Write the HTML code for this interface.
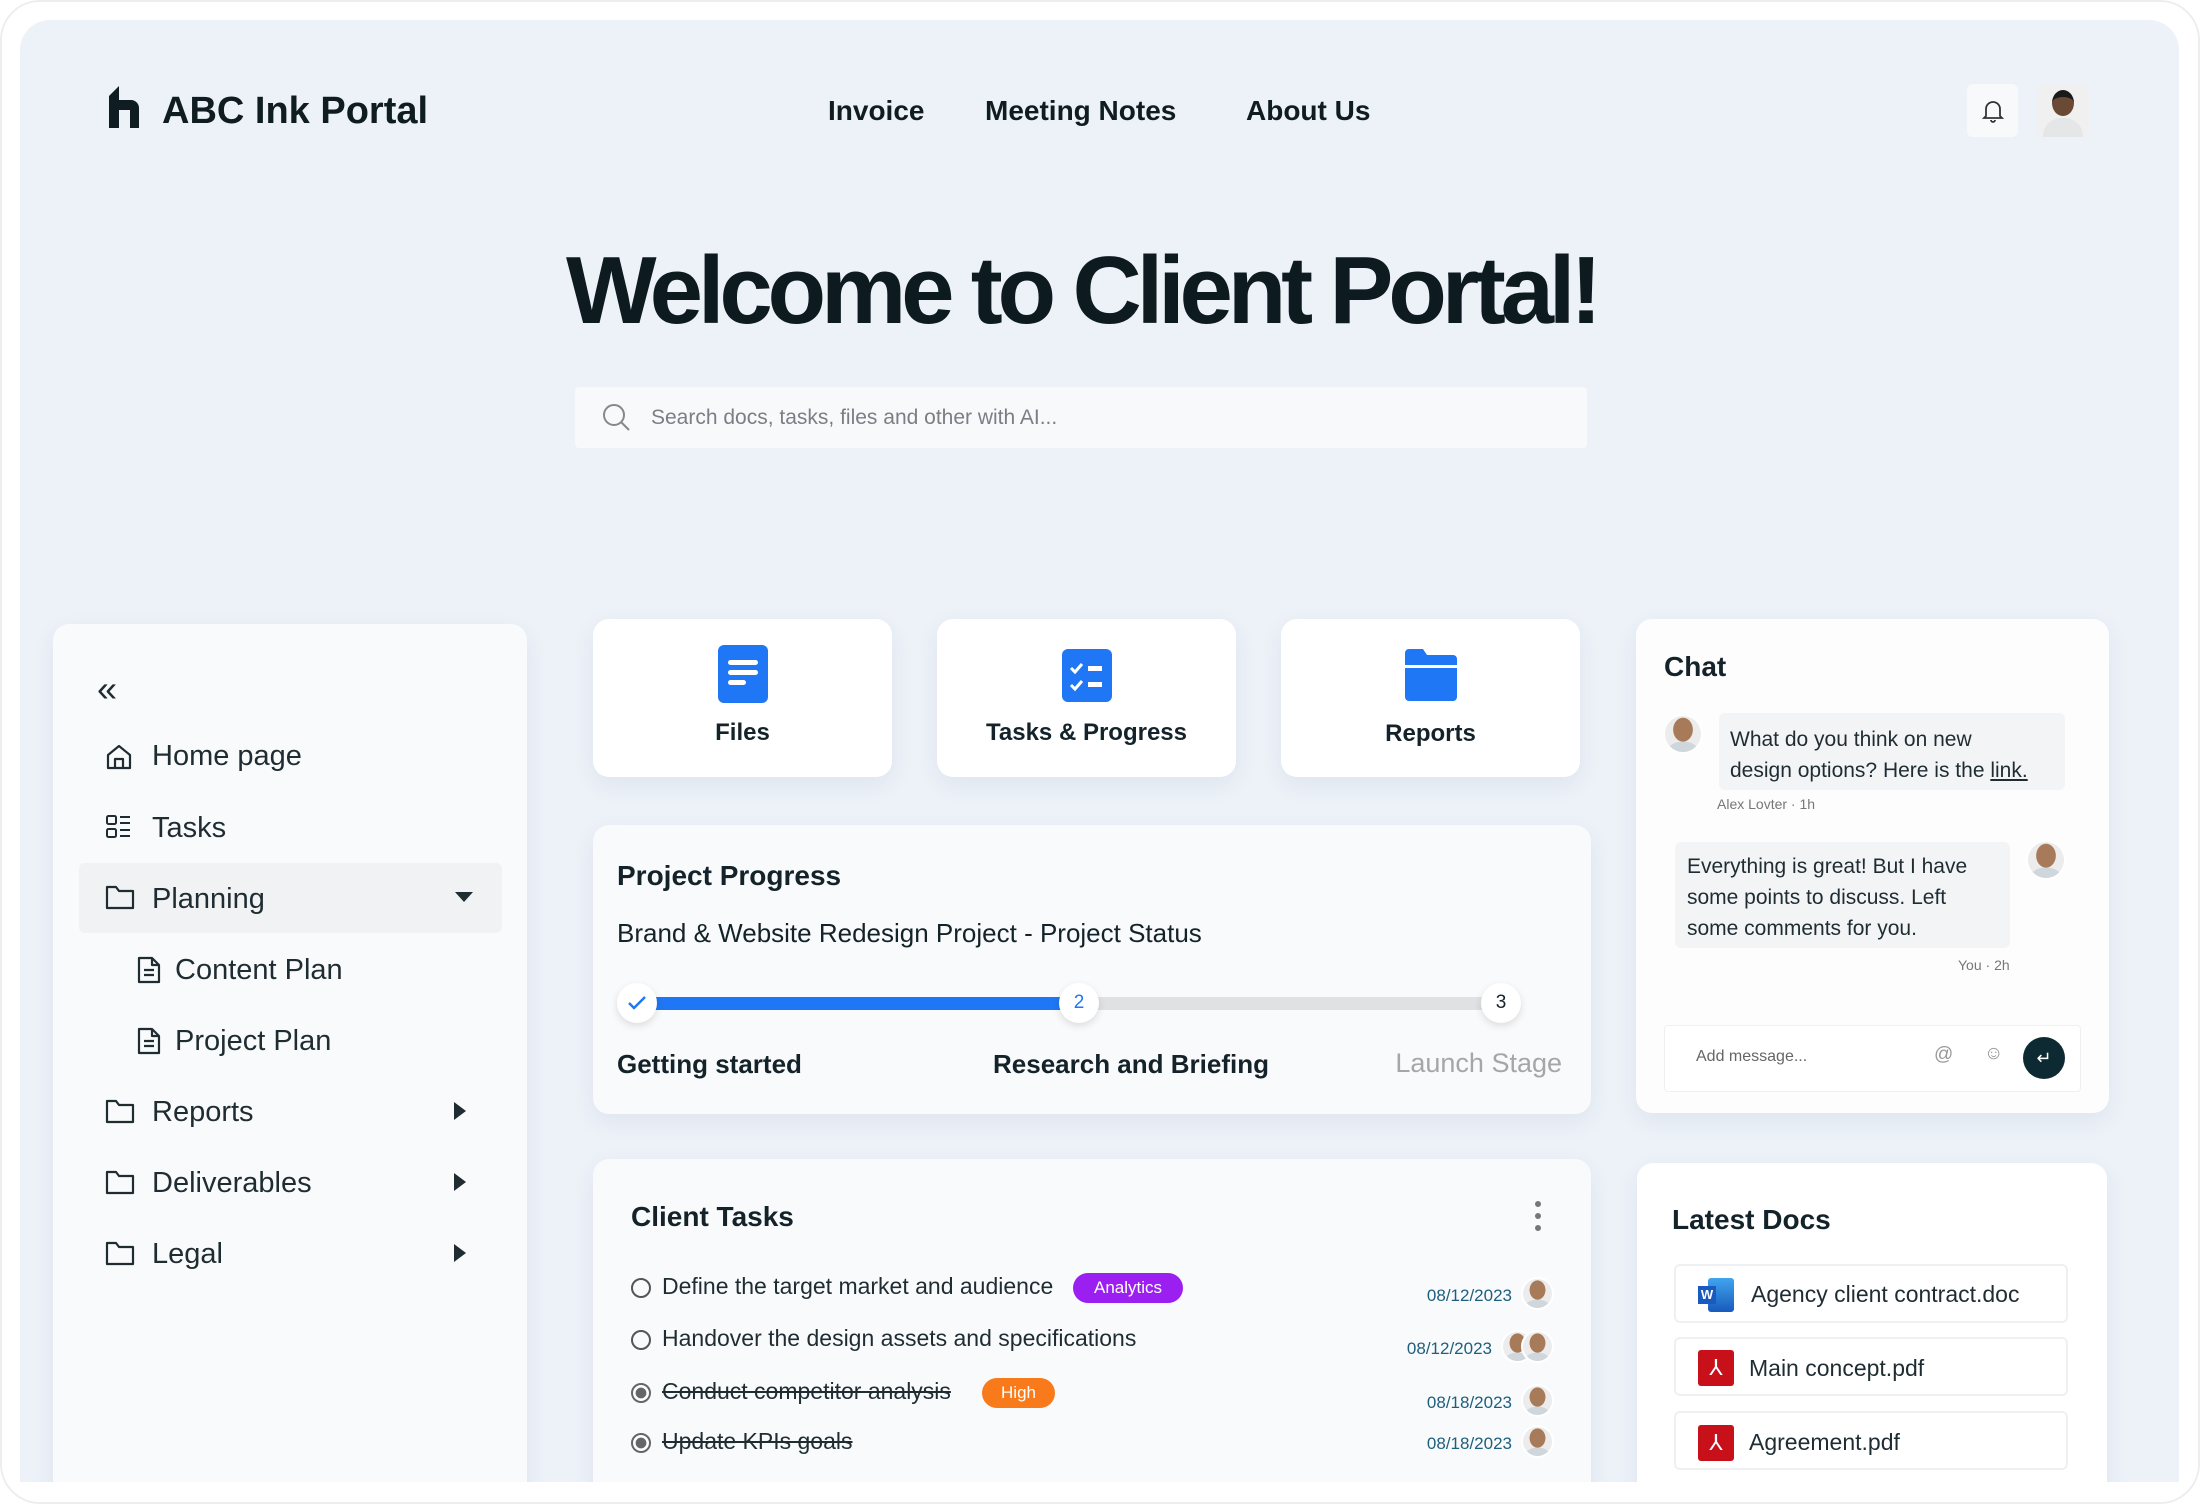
<!DOCTYPE html>
<html><head><meta charset="utf-8"><style>
*{box-sizing:border-box;margin:0;padding:0}
body{width:2200px;height:1504px;background:#fff;font-family:"Liberation Sans",sans-serif;color:#14232a;position:relative;overflow:hidden}
.abs{position:absolute}
.frame{position:absolute;left:0;top:0;width:2200px;height:1504px;border:2px solid #eceef1;border-radius:40px;background:#fff}
.main{position:absolute;left:20px;top:20px;width:2159px;height:1462px;background:#edf2f9;border-radius:30px 30px 0 0;overflow:hidden}
.card{position:absolute;background:#f9fafc;border-radius:16px;box-shadow:0 8px 24px rgba(40,60,90,.07)}
.t{position:absolute;white-space:nowrap}
.side .t{font-size:29px;color:#1f2d33}
.nav{font-size:28px;font-weight:700;color:#0f1d22}
.pill{position:absolute;border-radius:16px;color:#fff;font-size:17px;text-align:center;line-height:30px}
.date{position:absolute;font-size:17px;color:#1d5f7c;text-align:right;width:140px}
.av{position:absolute;border-radius:50%;background:radial-gradient(ellipse 28% 34% at 50% 38%,#a77a5a 0 95%,transparent 100%),radial-gradient(ellipse 45% 30% at 50% 100%,#cfd6dc 0 95%,transparent 100%),#ececec;border:2px solid #fff}
.doc{position:absolute;left:1654px;width:394px;height:59px;background:#fff;border:2px solid #eef0f3;border-radius:6px}
.h{font-weight:700}
</style></head><body>
<div class="frame"></div>
<div class="main">
<svg class="abs" style="left:87px;top:66px" width="34" height="42" viewBox="0 0 34 42"><path d="M2 42V10L12 0v42zM12 14h12a8 8 0 0 1 8 8v20h-9V24h-11z" fill="#0f1d22"/></svg>
<div class="t h" style="left:142px;top:70px;font-size:38px;color:#0f1d22">ABC Ink Portal</div>
<div class="t nav" style="left:808px;top:75px">Invoice</div>
<div class="t nav" style="left:965px;top:75px">Meeting Notes</div>
<div class="t nav" style="left:1226px;top:75px">About Us</div>
<div class="abs" style="left:1947px;top:64px;width:51px;height:53px;background:#f8f9fb;border-radius:6px"></div>
<svg class="abs" style="left:1962px;top:79px" width="22" height="24" viewBox="0 0 22 24"><path d="M4 17V10a7 7 0 0 1 14 0v7l2 2H2zM9 21a2 2 0 0 0 4 0" fill="none" stroke="#333" stroke-width="1.8"/></svg>
<div class="abs" style="left:2017px;top:64px;width:52px;height:53px;border-radius:6px;background:#f0f0f0;overflow:hidden"><div class="abs" style="left:15px;top:6px;width:22px;height:26px;border-radius:50%;background:#6b4a35;border-top:7px solid #1a1a1a"></div><div class="abs" style="left:6px;top:34px;width:40px;height:24px;border-radius:18px 18px 0 0;background:#e4e6e8"></div></div>
<div class="t" style="left:546px;top:216px;font-size:96px;font-weight:700;letter-spacing:-5.2px;color:#0d1a1f">Welcome to Client Portal!</div>
<div class="abs" style="left:555px;top:367px;width:1012px;height:61px;background:#f8f9fb;border-radius:4px"></div>
<svg class="abs" style="left:582px;top:383px" width="30" height="30" viewBox="0 0 30 30"><circle cx="12" cy="12" r="10" fill="none" stroke="#888" stroke-width="2"/><path d="M19 19l8 8" stroke="#888" stroke-width="2"/></svg>
<div class="t" style="left:631px;top:386px;font-size:21px;color:#7a7f85">Search docs, tasks, files and other with AI...</div>

<div class="card side" style="left:33px;top:604px;width:474px;height:900px">
<div class="t" style="left:44px;top:44px;font-size:36px;color:#1f2d33">«</div>
<div class="abs" style="left:26px;top:239px;width:423px;height:70px;background:#f1f2f4;border-radius:6px"></div>
<svg class="abs" style="left:52px;top:119px" width="28" height="28" viewBox="0 0 28 28"><path d="M3 12L14 3l11 9v13H3zM10 25v-9h8v9" fill="none" stroke="#1f2d33" stroke-width="2.2" stroke-linejoin="round"/></svg>
<div class="t" style="left:99px;top:116px">Home page</div>
<svg class="abs" style="left:52px;top:189px" width="28" height="28" viewBox="0 0 28 28"><rect x="2" y="3" width="9" height="8" rx="1.5" fill="none" stroke="#1f2d33" stroke-width="2"/><rect x="2" y="16" width="9" height="8" rx="1.5" fill="none" stroke="#1f2d33" stroke-width="2"/><path d="M15 4h10M15 10h10M15 17h10M15 23h10" stroke="#1f2d33" stroke-width="2"/></svg>
<div class="t" style="left:99px;top:188px">Tasks</div>
<svg class="abs" style="left:52px;top:260px" width="30" height="26" viewBox="0 0 30 26"><path d="M2 3h9l3 4h14v17H2z" fill="none" stroke="#1f2d33" stroke-width="2.2" stroke-linejoin="round"/></svg>
<div class="t" style="left:99px;top:259px">Planning</div>
<svg class="abs" style="left:402px;top:268px" width="18" height="12"><path d="M0 0h18L9 10z" fill="#1f2d33"/></svg>
<svg class="abs" style="left:84px;top:332px" width="24" height="28" viewBox="0 0 24 28"><path d="M2 2h13l7 7v17H2zM15 2v7h7M7 14h10M7 19h10" fill="none" stroke="#1f2d33" stroke-width="2.2" stroke-linejoin="round"/></svg>
<div class="t" style="left:122px;top:330px">Content Plan</div>
<svg class="abs" style="left:84px;top:403px" width="24" height="28" viewBox="0 0 24 28"><path d="M2 2h13l7 7v17H2zM15 2v7h7M7 14h10M7 19h10" fill="none" stroke="#1f2d33" stroke-width="2.2" stroke-linejoin="round"/></svg>
<div class="t" style="left:122px;top:401px">Project Plan</div>
<svg class="abs" style="left:52px;top:474px" width="30" height="26" viewBox="0 0 30 26"><path d="M2 3h9l3 4h14v17H2z" fill="none" stroke="#1f2d33" stroke-width="2.2" stroke-linejoin="round"/></svg>
<div class="t" style="left:99px;top:472px">Reports</div>
<svg class="abs" style="left:401px;top:478px" width="12" height="18"><path d="M0 0l12 9-12 9z" fill="#1f2d33"/></svg>
<svg class="abs" style="left:52px;top:545px" width="30" height="26" viewBox="0 0 30 26"><path d="M2 3h9l3 4h14v17H2z" fill="none" stroke="#1f2d33" stroke-width="2.2" stroke-linejoin="round"/></svg>
<div class="t" style="left:99px;top:543px">Deliverables</div>
<svg class="abs" style="left:401px;top:549px" width="12" height="18"><path d="M0 0l12 9-12 9z" fill="#1f2d33"/></svg>
<svg class="abs" style="left:52px;top:616px" width="30" height="26" viewBox="0 0 30 26"><path d="M2 3h9l3 4h14v17H2z" fill="none" stroke="#1f2d33" stroke-width="2.2" stroke-linejoin="round"/></svg>
<div class="t" style="left:99px;top:614px">Legal</div>
<svg class="abs" style="left:401px;top:620px" width="12" height="18"><path d="M0 0l12 9-12 9z" fill="#1f2d33"/></svg>
</div>

<div class="card" style="left:573px;top:599px;width:299px;height:158px;background:#fff">
<svg class="abs" style="left:125px;top:26px" width="50" height="58" viewBox="0 0 50 58"><rect width="50" height="58" rx="6" fill="#1f77f5"/><rect x="10" y="15" width="30" height="5" rx="2.5" fill="#fff"/><rect x="10" y="25" width="30" height="5" rx="2.5" fill="#fff"/><rect x="10" y="35" width="18" height="5" rx="2.5" fill="#fff"/></svg>
<div class="t h" style="left:0;width:299px;text-align:center;top:100px;font-size:24px">Files</div></div>
<div class="card" style="left:917px;top:599px;width:299px;height:158px;background:#fff">
<svg class="abs" style="left:125px;top:30px" width="50" height="53" viewBox="0 0 50 53"><rect width="50" height="53" rx="6" fill="#1f77f5"/><path d="M9 19l4 4 7-8M9 36l4 4 7-8" fill="none" stroke="#fff" stroke-width="3"/><rect x="26" y="17" width="14" height="5" fill="#fff"/><rect x="26" y="33" width="14" height="5" fill="#fff"/></svg>
<div class="t h" style="left:0;width:299px;text-align:center;top:100px;font-size:24px">Tasks &amp; Progress</div></div>
<div class="card" style="left:1261px;top:599px;width:299px;height:158px;background:#fff">
<svg class="abs" style="left:124px;top:30px" width="52" height="52" viewBox="0 0 52 52"><path d="M0 4a4 4 0 0 1 4-4h14l4 6h26a4 4 0 0 1 4 4v6H0z" fill="#1f77f5"/><path d="M0 19h52v29a4 4 0 0 1-4 4H4a4 4 0 0 1-4-4z" fill="#1f77f5"/></svg>
<div class="t h" style="left:0;width:299px;text-align:center;top:101px;font-size:24px">Reports</div></div>

<div class="card" style="left:573px;top:805px;width:998px;height:289px">
<div class="t h" style="left:24px;top:35px;font-size:28px">Project Progress</div>
<div class="t" style="left:24px;top:93px;font-size:26px">Brand &amp; Website Redesign Project - Project Status</div>
<div class="abs" style="left:44px;top:172px;width:442px;height:13px;background:#1f77f5"></div>
<div class="abs" style="left:486px;top:172px;width:422px;height:13px;background:#e0e1e3"></div>
<div class="abs" style="left:24px;top:158px;width:40px;height:40px;border-radius:50%;background:#fff;box-shadow:0 3px 8px rgba(0,0,0,.12)"></div>
<svg class="abs" style="left:34px;top:170px" width="20" height="16"><path d="M2 8l5 5 11-11" fill="none" stroke="#1f77f5" stroke-width="2.4"/></svg>
<div class="abs" style="left:466px;top:158px;width:40px;height:40px;border-radius:50%;background:#fff;box-shadow:0 3px 8px rgba(0,0,0,.12);text-align:center;line-height:40px;color:#1f77f5;font-size:19px">2</div>
<div class="abs" style="left:888px;top:158px;width:40px;height:40px;border-radius:50%;background:#fff;box-shadow:0 3px 8px rgba(0,0,0,.12);text-align:center;line-height:40px;font-size:19px">3</div>
<div class="t h" style="left:24px;top:224px;font-size:26px">Getting started</div>
<div class="t h" style="left:400px;top:224px;font-size:26px">Research and Briefing</div>
<div class="t" style="right:29px;top:223px;font-size:27px;color:#a4a7aa">Launch Stage</div>
</div>

<div class="card" style="left:573px;top:1139px;width:998px;height:400px">
<div class="t h" style="left:38px;top:42px;font-size:28px">Client Tasks</div>
<svg class="abs" style="left:940px;top:42px" width="10" height="30"><circle cx="5" cy="3" r="3" fill="#777"/><circle cx="5" cy="15" r="3" fill="#777"/><circle cx="5" cy="27" r="3" fill="#777"/></svg>
<div class="abs" style="left:38px;top:119px;width:20px;height:20px;border-radius:50%;border:2px solid #555"></div>
<div class="t" style="left:69px;top:114px;font-size:23px;color:#1f2d33">Define the target market and audience</div>
<div class="pill" style="left:480px;top:114px;width:110px;background:#9b1ff0">Analytics</div>
<div class="date" style="left:779px;top:127px">08/12/2023</div>
<div class="av" style="left:928px;top:118px;width:33px;height:33px"></div>
<div class="abs" style="left:38px;top:171px;width:20px;height:20px;border-radius:50%;border:2px solid #555"></div>
<div class="t" style="left:69px;top:166px;font-size:23px;color:#1f2d33">Handover the design assets and specifications</div>
<div class="date" style="left:759px;top:180px">08/12/2023</div>
<div class="av" style="left:908px;top:171px;width:33px;height:33px"></div>
<div class="av" style="left:928px;top:171px;width:33px;height:33px"></div>
<div class="abs" style="left:38px;top:224px;width:20px;height:20px;border-radius:50%;border:2px solid #666;background:radial-gradient(#666 0 45%,#fff 50%)"></div>
<div class="t" style="left:69px;top:219px;font-size:23px;color:#1f2d33;text-decoration:line-through">Conduct competitor analysis</div>
<div class="pill" style="left:389px;top:219px;width:73px;background:#f97a1a">High</div>
<div class="date" style="left:779px;top:234px">08/18/2023</div>
<div class="av" style="left:928px;top:225px;width:33px;height:33px"></div>
<div class="abs" style="left:38px;top:274px;width:20px;height:20px;border-radius:50%;border:2px solid #666;background:radial-gradient(#666 0 45%,#fff 50%)"></div>
<div class="t" style="left:69px;top:269px;font-size:23px;color:#1f2d33;text-decoration:line-through">Update KPIs goals</div>
<div class="date" style="left:779px;top:275px">08/18/2023</div>
<div class="av" style="left:928px;top:266px;width:33px;height:33px"></div>
</div>

<div class="card" style="left:1616px;top:599px;width:473px;height:494px;background:#fdfdfe">
<div class="t h" style="left:28px;top:32px;font-size:28px">Chat</div>
<div class="av" style="left:27px;top:95px;width:40px;height:40px"></div>
<div class="abs" style="left:83px;top:94px;width:346px;height:77px;background:#f3f4f6;border-radius:6px"></div>
<div class="t" style="left:94px;top:105px;font-size:21px;line-height:31px;color:#1f2d33">What do you think on new<br>design options? Here is the <u>link.</u></div>
<div class="t" style="left:81px;top:177px;font-size:14px;color:#777">Alex Lovter · 1h</div>
<div class="abs" style="left:39px;top:223px;width:335px;height:106px;background:#f3f4f6;border-radius:6px"></div>
<div class="t" style="left:51px;top:232px;font-size:21px;line-height:31px;color:#1f2d33">Everything is great! But I have<br>some points to discuss. Left<br>some comments for you.</div>
<div class="av" style="left:390px;top:221px;width:40px;height:40px"></div>
<div class="t" style="left:322px;top:338px;font-size:14px;color:#777">You · 2h</div>
<div class="abs" style="left:28px;top:406px;width:417px;height:67px;background:#fff;border:1px solid #eef0f3;border-radius:4px"></div>
<div class="t" style="left:60px;top:429px;font-size:16px;color:#666">Add message...</div>
<div class="t" style="left:298px;top:425px;font-size:19px;color:#999">@</div>
<div class="t" style="left:348px;top:424px;font-size:19px;color:#999">☺</div>
<div class="abs" style="left:387px;top:418px;width:42px;height:42px;border-radius:50%;background:#0d2a33;color:#fff;text-align:center;line-height:42px;font-size:18px">↵</div>
</div>

<div class="card" style="left:1617px;top:1143px;width:470px;height:400px;background:#fff">
<div class="t h" style="left:35px;top:41px;font-size:28px">Latest Docs</div>
</div>
<div class="doc" style="top:1244px"></div>
<div class="abs" style="left:1678px;top:1258px;width:36px;height:34px"><div class="abs" style="left:10px;top:0;width:26px;height:34px;background:linear-gradient(#41a5ee,#185abd);border-radius:3px"></div><div class="abs" style="left:0;top:8px;width:18px;height:18px;background:#185abd;color:#fff;font-size:13px;text-align:center;line-height:18px;font-weight:700">W</div></div>
<div class="t" style="left:1731px;top:1261px;font-size:23px;color:#1f2d33">Agency client contract.doc</div>
<div class="doc" style="top:1317px"></div>
<div class="abs" style="left:1678px;top:1330px;width:36px;height:36px;background:#c8101a;border-radius:3px;color:#fff;text-align:center;line-height:36px;font-size:22px">⅄</div>
<div class="t" style="left:1729px;top:1335px;font-size:23px;color:#1f2d33">Main concept.pdf</div>
<div class="doc" style="top:1391px"></div>
<div class="abs" style="left:1678px;top:1405px;width:36px;height:36px;background:#c8101a;border-radius:3px;color:#fff;text-align:center;line-height:36px;font-size:22px">⅄</div>
<div class="t" style="left:1729px;top:1409px;font-size:23px;color:#1f2d33">Agreement.pdf</div>
</div>
</body></html>
